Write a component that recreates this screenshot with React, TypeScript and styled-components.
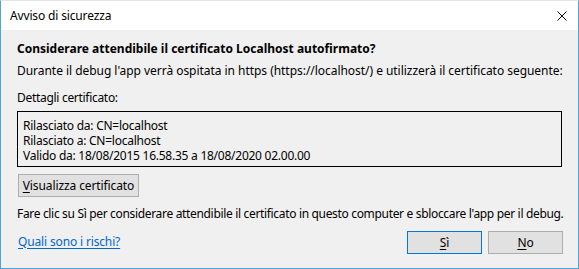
import React from "react";
import styled, { createGlobalStyle } from "styled-components";

const Global = createGlobalStyle`
  html, body {
    margin: 0;
    padding: 0;
    background: #f0f0f0;
  }
  body {
    font-family: "Noto Sans", "Open Sans", sans-serif;
    font-size: 12px;
    letter-spacing: -0.15px;
    color: #000;
  }
`;

const Window = styled.div`
  width: 579px;
  height: 269px;
  box-sizing: border-box;
  border: 1px solid #4fa3d6;
  border-top-color: #e6e6e6;
  background: #f0f0f0;
  display: flex;
  flex-direction: column;
`;

const TitleBar = styled.div`
  height: 29px;
  background: #fff;
  display: flex;
  align-items: center;
  justify-content: space-between;
  padding-left: 9px;
  padding-right: 9px;
  font-size: 12px;
`;

const Close = styled.svg`
  width: 10px;
  height: 10px;
  margin-right: 2px;
`;

const Body = styled.div`
  flex: 1;
  display: flex;
  flex-direction: column;
  padding: 11px 16px 0 16px;
`;

const Line = styled.div<{ $bold?: boolean; $gap?: number; $ls?: number }>`
  line-height: 16px;
  font-weight: ${(p) => (p.$bold ? 700 : 400)};
  letter-spacing: ${(p) => (p.$bold ? 0 : p.$ls ?? -0.15)}px;
  margin-top: ${(p) => p.$gap ?? 0}px;
  white-space: nowrap;
`;

const Details = styled.div`
  margin-top: 5px;
  height: 56px;
  box-sizing: border-box;
  border: 1px solid #000;
  padding: 6px 0 0 5px;
  line-height: 15px;
  letter-spacing: -0.25px;
  white-space: nowrap;
`;

const Button = styled.button<{ $primary?: boolean; $width: number }>`
  width: ${(p) => p.$width}px;
  height: 23px;
  box-sizing: border-box;
  background: #e1e1e1;
  border: 1px solid ${(p) => (p.$primary ? "#0078d7" : "#adadad")};
  font-family: inherit;
  font-size: 12px;
  letter-spacing: -0.1px;
  color: #000;
  padding: 0;
  line-height: 20px;

  & u {
    text-decoration-thickness: 1px;
    text-underline-offset: 2px;
  }
`;

const ViewButton = styled(Button)`
  margin-top: 7px;
  margin-left: 1px;
`;

const Footer = styled.div`
  margin-top: 9px;
  display: flex;
  align-items: center;
  justify-content: space-between;
`;

const Link = styled.a`
  color: #0066cc;
  text-decoration: underline;
  text-underline-offset: 2px;
  margin-left: 1px;
  margin-bottom: 3px;
`;

const Buttons = styled.div`
  display: flex;
  gap: 6px;
  margin-right: -1px;
`;

export default function App() {
  return (
    <>
      <Global />
      <Window>
        <TitleBar>
          <span>Avviso di sicurezza</span>
          <Close viewBox="0 0 10 10">
            <path d="M0.5 0.5 L9.5 9.5 M9.5 0.5 L0.5 9.5" stroke="#000" strokeWidth="1" />
          </Close>
        </TitleBar>
        <Body>
          <Line $bold>Considerare attendibile il certificato Localhost autofirmato?</Line>
          <Line $gap={6} $ls={-0.04}>
            Durante il debug l'app verrà ospitata in https (https://localhost/) e utilizzerà il certificato seguente:
          </Line>
          <Line $gap={11} $ls={-0.3}>Dettagli certificato:</Line>
          <Details>
            Rilasciato da: CN=localhost
            <br />
            Rilasciato a: CN=localhost
            <br />
            Valido da: 18/08/2015 16.58.35 a 18/08/2020 02.00.00
          </Details>
          <ViewButton $width={121}>
            <u>V</u>isualizza certificato
          </ViewButton>
          <Line $gap={9} $ls={-0.33}>
            Fare clic su Sì per considerare attendibile il certificato in questo computer e sbloccare l'app per il debug.
          </Line>
          <Footer>
            <Link href="#">Quali sono i rischi?</Link>
            <Buttons>
              <Button $primary $width={75}>
                <u>S</u>ì
              </Button>
              <Button $width={75}>
                <u>N</u>o
              </Button>
            </Buttons>
          </Footer>
        </Body>
      </Window>
    </>
  );
}
